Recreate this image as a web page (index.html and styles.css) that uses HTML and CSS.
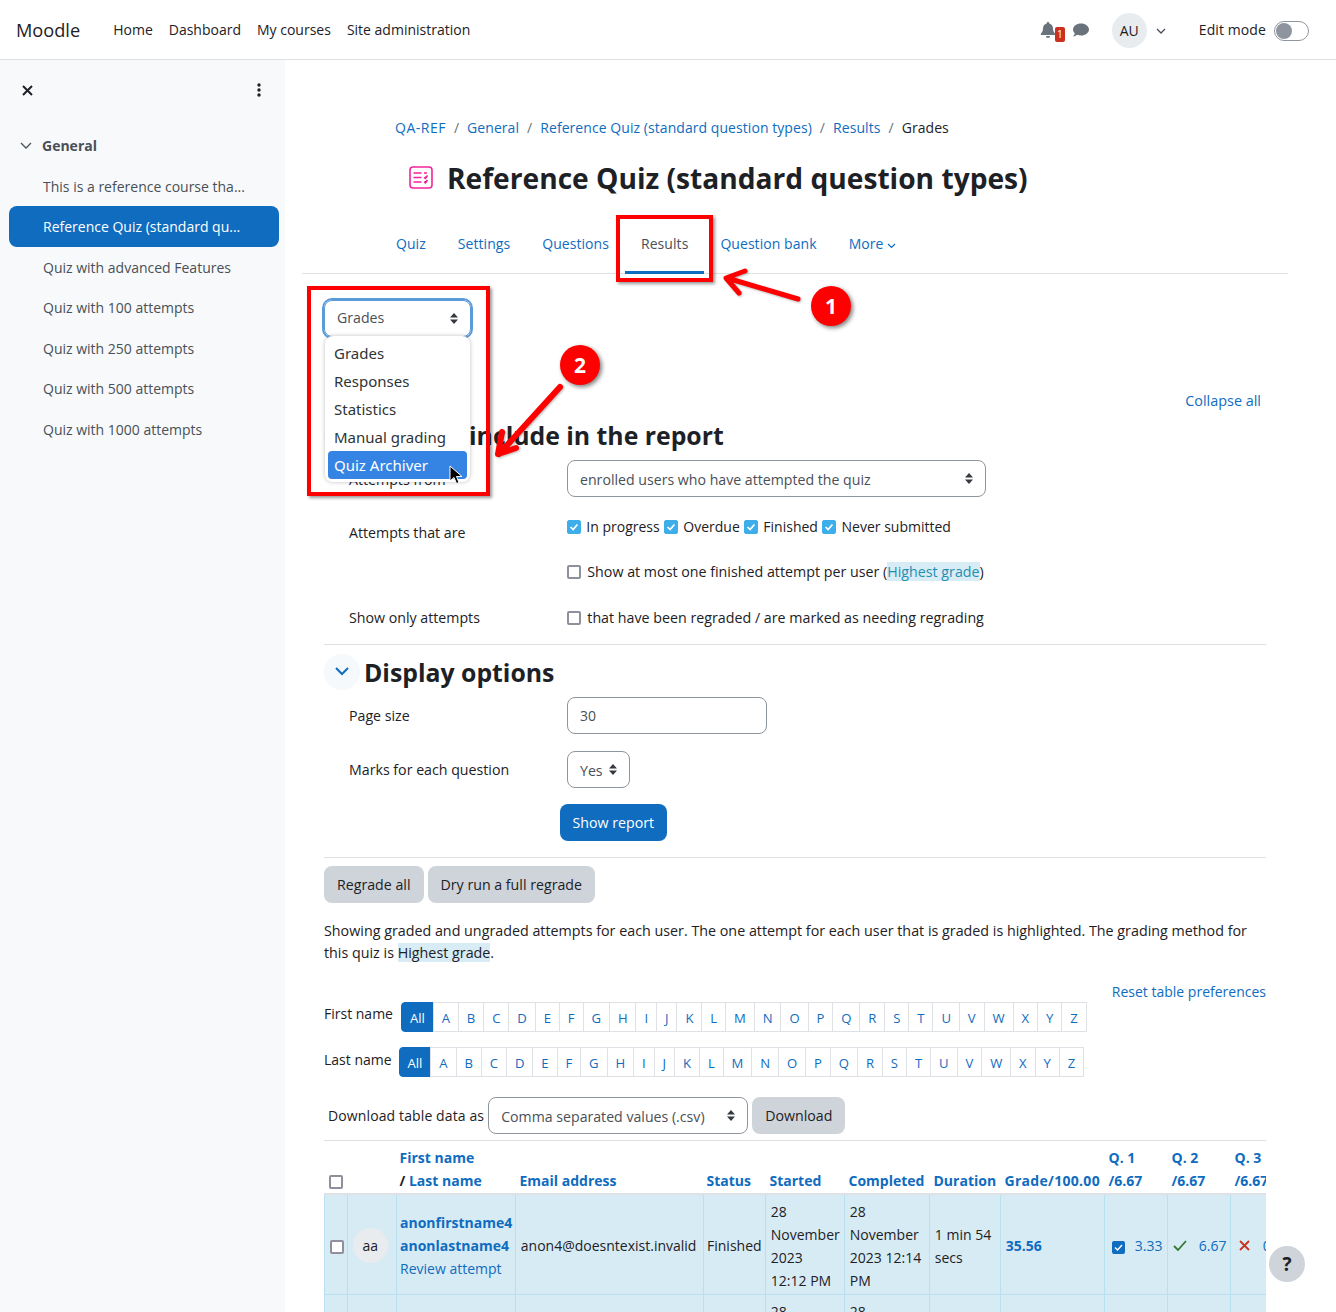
FILE: index.html
```html
<!DOCTYPE html>
<html lang="en">
<head>
    <meta charset="UTF-8">
    <meta name="viewport" content="width=device-width, initial-scale=1.0">
    <title>Reference Quiz: Grades</title>
    <link rel="stylesheet" href="styles.css">
</head>
<body>

    <nav class="navbar">
        <a class="brand">Moodle</a>
        <ul class="primary-nav">
            <li>Home</li>
            <li>Dashboard</li>
            <li>My courses</li>
            <li>Site administration</li>
        </ul>
        <div class="user-nav">
            <span class="bell">
                <svg width="16" height="17" viewBox="0 0 16 17"><path fill="#6a737b" d="M8 0a1.3 1.3 0 0 0-1.3 1.4C4.4 2 3 3.900 3 6.200c0 3.400-1.200 4.300-2.200 5.500-.4.500-.1 1.300.7 1.300h13c.8 0 1.100-.8.700-1.300-1-1.200-2.200-2.100-2.200-5.500 0-2.300-1.400-4.200-3.700-4.800A1.300 1.300 0 0 0 8 0zM6 14a2 2 0 0 0 4 0z"/></svg>
                <span class="bell-count">1</span>
            </span>
            <svg class="chat" width="16" height="15" viewBox="0 0 16 15"><path fill="#6a737b" d="M8 .5C3.600.5 0 3.100 0 6.500c0 1.500.7 2.800 1.800 3.800-.3 1.300-1.100 2.400-1.700 3.200 1.700-.1 3.300-.9 4.300-1.700 1.100.4 2.300.7 3.600.7 4.400 0 8-2.700 8-6S12.400.5 8 .5z"/></svg>
            <span class="avatar">AU</span>
            <svg class="caret" width="10" height="6" viewBox="0 0 10 6"><path fill="none" stroke="#495057" stroke-width="1.300" d="M1 1l4 4 4-4"/></svg>
            <span class="edit-label">Edit mode</span>
            <span class="switch"><span class="knob"></span></span>
        </div>
    </nav>

    <div class="layout">
        <aside class="drawer">
            <div class="drawer-top">
                <svg width="11" height="11" viewBox="0 0 11 11"><path stroke="#1d2125" stroke-width="2" d="M1 1l9 9M10 1l-9 9"/></svg>
                <svg width="4" height="14" viewBox="0 0 4 14"><circle cx="2" cy="2" r="1.700" fill="#1d2125"/><circle cx="2" cy="7" r="1.700" fill="#1d2125"/><circle cx="2" cy="12" r="1.700" fill="#1d2125"/></svg>
            </div>
            <div class="drawer-section">
                <svg width="12" height="8" viewBox="0 0 12 8"><path fill="none" stroke="#495057" stroke-width="1.300" d="M1 1l5 5 5-5"/></svg>
                <span>General</span>
            </div>
            <ul class="drawer-list">
                <li>This is a reference course tha...</li>
                <li class="active">Reference Quiz (standard qu...</li>
                <li>Quiz with advanced Features</li>
                <li>Quiz with 100 attempts</li>
                <li>Quiz with 250 attempts</li>
                <li>Quiz with 500 attempts</li>
                <li>Quiz with 1000 attempts</li>
            </ul>
        </aside>

        <main class="main">
            <div class="page-head">
                <ol class="breadcrumb">
                    <li><a>QA-REF</a></li>
                    <li class="sep">/</li>
                    <li><a>General</a></li>
                    <li class="sep">/</li>
                    <li><a>Reference Quiz (standard question types)</a></li>
                    <li class="sep">/</li>
                    <li><a>Results</a></li>
                    <li class="sep">/</li>
                    <li>Grades</li>
                </ol>
                <div class="title-row">
                    <svg width="24" height="23" viewBox="0 0 24 23"><rect x="1" y="1" width="22" height="21" rx="3" fill="none" stroke="#f5249c" stroke-width="1.600"/><path stroke="#f5249c" stroke-width="1.500" d="M4.500 7h8M4.500 11.500h8M4.500 16h8M15 7h3M15 11.500l1.500 1 2-3M15 16l1.500 1 2-3"/></svg>
                    <h1>Reference Quiz (standard question types)</h1>
                </div>
            </div>

            <ul class="tabs">
                <li><a>Quiz</a></li>
                <li><a>Settings</a></li>
                <li><a>Questions</a></li>
                <li class="active"><a>Results</a></li>
                <li><a>Question bank</a></li>
                <li><a>More <svg width="9" height="6" viewBox="0 0 9 6"><path fill="none" stroke="#0f6cbf" stroke-width="1.200" d="M1 1l3.500 3.500L8 1"/></svg></a></li>
            </ul>

            <div class="content">
                <div class="select report-select">Grades<svg class="updown" width="8" height="11" viewBox="0 0 8 11"><path fill="#343a40" d="M4 0l4 4.500H0zM4 11L0 6.500h8z"/></svg></div>

                <div class="collapse-all"><a>Collapse all</a></div>

                <div class="section-head first">
                    <span class="chevron"><svg width="14" height="9" viewBox="0 0 14 9"><path fill="none" stroke="#0f6cbf" stroke-width="2" d="M1 1l6 6 6-6"/></svg></span>
                    <h3>What to include in the report</h3>
                </div>

                <div class="row row-attempts-from">
                    <label>Attempts from</label>
                    <div class="select wide">enrolled users who have attempted the quiz<svg class="updown" width="8" height="11" viewBox="0 0 8 11"><path fill="#343a40" d="M4 0l4 4.500H0zM4 11L0 6.500h8z"/></svg></div>
                </div>

                <div class="row row-attempts-that">
                    <label>Attempts that are</label>
                    <div>
                        <div class="checks">
                            <span class="check on"></span><span>In progress</span>
                            <span class="check on"></span><span>Overdue</span>
                            <span class="check on"></span><span>Finished</span>
                            <span class="check on"></span><span>Never submitted</span>
                        </div>
                        <div class="checks second">
                            <span class="check"></span><span>Show at most one finished attempt per user (<a class="hl link-hl">Highest grade</a>)</span>
                        </div>
                    </div>
                </div>

                <div class="row row-only">
                    <label>Show only attempts</label>
                    <div class="checks">
                        <span class="check"></span><span>that have been regraded / are marked as needing regrading</span>
                    </div>
                </div>

                <hr class="rule rule-a">

                <div class="section-head">
                    <span class="chevron"><svg width="14" height="9" viewBox="0 0 14 9"><path fill="none" stroke="#0f6cbf" stroke-width="2" d="M1 1l6 6 6-6"/></svg></span>
                    <h3>Display options</h3>
                </div>

                <div class="row row-size">
                    <label>Page size</label>
                    <input class="text-input" type="text" value="30">
                </div>
                <div class="row row-marks">
                    <label>Marks for each question</label>
                    <div class="select small">Yes<svg class="updown" width="8" height="11" viewBox="0 0 8 11"><path fill="#343a40" d="M4 0l4 4.500H0zM4 11L0 6.500h8z"/></svg></div>
                </div>
                <button class="btn primary show-report">Show report</button>

                <hr class="rule rule-b">

                <div class="regrade">
                    <button class="btn secondary">Regrade all</button>
                    <button class="btn secondary">Dry run a full regrade</button>
                </div>

                <p class="summary">Showing graded and ungraded attempts for each user. The one attempt for each user that is graded is highlighted. The grading method for this quiz is <span class="hl">Highest grade</span>.</p>

                <div class="reset"><a>Reset table preferences</a></div>

                <div class="initials first-initials" id="firstInitials"><span class="initials-label">First name</span></div>
                <div class="initials last-initials" id="lastInitials"><span class="initials-label">Last name</span></div>

                <div class="download">
                    <span class="download-label">Download table data as</span>
                    <div class="select csv">Comma separated values (.csv)<svg class="updown" width="8" height="11" viewBox="0 0 8 11"><path fill="#343a40" d="M4 0l4 4.500H0zM4 11L0 6.500h8z"/></svg></div>
                    <button class="btn secondary">Download</button>
                </div>

                <div class="table-wrap">
                    <table class="grades">
                        <colgroup>
                            <col style="width:23px"><col style="width:49px"><col style="width:119px"><col style="width:188px"><col style="width:62px"><col style="width:79px"><col style="width:85px"><col style="width:71px"><col style="width:104px"><col style="width:63px"><col style="width:63px"><col style="width:63px">
                        </colgroup>
                        <thead>
                            <tr>
                                <th><span class="check"></span></th>
                                <th></th>
                                <th class="name-cell"><a>First name</a><br><span class="slash">/</span> <a>Last name</a></th>
                                <th><a>Email address</a></th>
                                <th class="status-cell"><a>Status</a></th>
                                <th><a>Started</a></th>
                                <th><a>Completed</a></th>
                                <th><a>Duration</a></th>
                                <th class="grade-head"><a>Grade/100.00</a></th>
                                <th><a>Q. 1<br>/6.67</a></th>
                                <th><a>Q. 2<br>/6.67</a></th>
                                <th><a>Q. 3<br>/6.67</a></th>
                            </tr>
                        </thead>
                        <tbody>
                            <tr>
                                <td><span class="check"></span></td>
                                <td><span class="user-pic">aa</span></td>
                                <td class="name-cell"><a class="strong">anonfirstname4<br>anonlastname4</a><br><a>Review attempt</a></td>
                                <td>anon4@doesntexist.invalid</td>
                                <td class="status-cell">Finished</td>
                                <td>28<br>November<br>2023<br>12:12 PM</td>
                                <td>28<br>November<br>2023 12:14<br>PM</td>
                                <td>1 min 54 secs</td>
                                <td><a class="strong">35.56</a></td>
                                <td class="mark"><span class="flag"><svg width="9" height="7" viewBox="0 0 9 7"><path fill="none" stroke="#fff" stroke-width="1.400" d="M1 3.500l2.500 2.500L8 1"/></svg></span><a>3.33</a></td>
                                <td class="mark"><svg class="tick" width="14" height="11" viewBox="0 0 14 11"><path fill="none" stroke="#357a32" stroke-width="1.800" d="M1 6l4 4 8-9"/></svg><a>6.67</a></td>
                                <td class="mark"><svg class="cross" width="11" height="11" viewBox="0 0 11 11"><path stroke="#ca3120" stroke-width="1.800" d="M1 1l9 9M10 1l-9 9"/></svg><a>0.00</a></td>
                            </tr>
                            <tr>
                                <td><span class="check"></span></td>
                                <td></td>
                                <td></td>
                                <td></td>
                                <td></td>
                                <td>28<br>November<br>2023<br>12:15 PM</td>
                                <td>28<br>November<br>2023 12:16<br>PM</td>
                                <td></td>
                                <td></td>
                                <td></td>
                                <td></td>
                                <td></td>
                            </tr>
                        </tbody>
                    </table>
                </div>
            </div>
        </main>
    </div>

    <!-- screenshot annotations and open menu, these sit over the page -->
    <div class="menu">
        <div>Grades</div>
        <div>Responses</div>
        <div>Statistics</div>
        <div>Manual grading</div>
        <div class="picked">Quiz Archiver</div>
    </div>
    <svg class="cursor" width="14" height="20" viewBox="0 0 14 20"><path fill="#000" stroke="#fff" stroke-width="1" d="M1 1v15l4-3.500 2.500 6 2.500-1-2.500-6H13z"/></svg>
    <div class="red-box box-results"></div>
    <div class="red-box box-menu"></div>
    <svg class="arrows" width="1336" height="600" viewBox="0 0 1336 600">
        <g fill="none" stroke="#f00" stroke-width="5" stroke-linecap="round" stroke-linejoin="round">
            <path d="M798 299L727 278M745 271l-19 7 13 15"/>
            <path stroke-width="6" d="M560 387L499 454M502 432l-4 22 18-6"/>
        </g>
    </svg>
    <span class="num num-1">1</span>
    <span class="num num-2">2</span>

    <button class="help">?</button>

    <script>
        const letters = "ABCDEFGHIJKLMNOPQRSTUVWXYZ".split("");

        function fillInitials(id) {
            const row = document.getElementById(id);
            const bar = document.createElement("div");
            bar.className = "initials-bar";
            ["All"].concat(letters).forEach(function (letter) {
                const cell = document.createElement("a");
                cell.textContent = letter;
                if (letter === "All") {
                    cell.className = "on";
                }
                bar.appendChild(cell);
            });
            row.appendChild(bar);
        }

        fillInitials("firstInitials");
        fillInitials("lastInitials");
    </script>

</body>
</html>
```

FILE: styles.css
```css
* {
    box-sizing: border-box;
}

html, body {
    margin: 0;
    height: 1312px;
    overflow: hidden;
}

body {
    position: relative;
    font-family: "Open Sans", "Liberation Sans", sans-serif;
    font-size: 14px;
    line-height: 22.5px;
    color: #1d2125;
    background: #fff;
}

a {
    color: #0f6cbf;
    text-decoration: none;
}

ul, ol {
    list-style: none;
    margin: 0;
    padding: 0;
}

/* top bar */
.navbar {
    display: flex;
    align-items: center;
    height: 60px;
    padding: 2px 27px 0 16px;
    border-bottom: 1px solid #dee2e6;
    background: #fff;
}

.brand {
    color: #1d2125;
    font-size: 18.200px;
    margin-right: 33px;
}

.primary-nav {
    display: flex;
    gap: 16px;
}

.user-nav {
    display: flex;
    align-items: center;
    margin-left: auto;
}

.bell {
    position: relative;
    display: flex;
    margin-right: 17px;
}

.bell-count {
    position: absolute;
    left: 15px;
    top: 5px;
    width: 10px;
    height: 15px;
    background: #ca3120;
    border-radius: 2px;
    color: #fff;
    font-size: 10px;
    line-height: 15px;
    text-align: center;
}

.chat {
    margin-right: 23px;
}

.avatar {
    width: 35px;
    height: 35px;
    border-radius: 50%;
    background: #e9ecef;
    text-align: center;
    line-height: 35px;
    margin-right: 9px;
}

.caret {
    margin-right: 33px;
}

.edit-label {
    margin-right: 8px;
    letter-spacing: 0.1px;
}

.switch {
    display: flex;
    align-items: center;
    width: 35px;
    height: 20px;
    border: 1px solid #8f959e;
    border-radius: 10px;
    padding: 1px;
}

.knob {
    width: 16px;
    height: 16px;
    border-radius: 50%;
    background: #8f959e;
}

/* layout */
.layout {
    display: flex;
    height: 1252px;
}

.drawer {
    width: 285px;
    flex: none;
    background: #f8f9fa;
    padding: 0 6px 0 9px;
    color: #495057;
}

.drawer-top {
    display: flex;
    justify-content: space-between;
    align-items: center;
    height: 20px;
    margin-top: 20px;
    padding: 0 18px 0 13px;
}

.drawer-section {
    display: flex;
    align-items: center;
    gap: 10px;
    margin-top: 35px;
    padding-left: 11px;
    font-weight: 700;
}

.drawer-list {
    margin-top: 8px;
}

.drawer-list li {
    height: 40.500px;
    line-height: 42px;
    padding-left: 34px;
}

.drawer-list li.active {
    background: #0f6cbf;
    color: #fff;
    border-radius: 8px;
    line-height: 41px;
}

.main {
    flex: 1;
    min-width: 0;
    padding: 0 48px 0 17px;
}

.page-head {
    padding: 57px 0 0 93px;
}

.breadcrumb {
    display: flex;
    gap: 8px;
    letter-spacing: 0.06px;
}

.breadcrumb li:first-child {
    letter-spacing: 0.5px;
}

.sep {
    color: #6a737b;
}

.title-row {
    display: flex;
    align-items: center;
    gap: 14px;
    height: 40px;
    margin-top: 18px;
    padding-left: 14px;
}

h1 {
    margin: 0;
    font-size: 28.150px;
    line-height: 40px;
    font-weight: 700;
}

.tabs {
    display: flex;
    height: 57px;
    margin-top: 19px;
    padding-left: 78px;
    border-bottom: 1px solid #dee2e6;
    letter-spacing: 0.06px;
}

.tabs li {
    padding: 16px 16px 0;
}

.tabs li.active {
    border-bottom: 3px solid #0f6cbf;
    height: 57px;
}

.tabs li.active a {
    color: #495057;
}

.content {
    padding: 0 22px;
    height: 1038px;
}

/* form bits */
.select {
    position: relative;
    height: 37px;
    border: 1px solid #8f959e;
    border-radius: 8px;
    padding: 0 12px;
    font-size: 14.150px;
    line-height: 37px;
    color: #495057;
}

.updown {
    position: absolute;
    right: 12px;
    top: 12px;
}

.report-select {
    width: 147px;
    margin-top: 26px;
    box-shadow: 0 0 0 2px #5b9bd9;
    border-color: #5b9bd9;
    line-height: 34px;
}

.collapse-all {
    text-align: right;
    padding-right: 5px;
    margin-top: 53px;
    font-size: 14.400px;
}

.section-head {
    display: flex;
    align-items: center;
    height: 36px;
    gap: 4px;
}

.section-head.first {
    margin-top: 5px;
}

.section-head h3 {
    margin: 0;
    font-size: 24.800px;
    line-height: 36px;
    font-weight: 700;
}

.chevron {
    display: flex;
    align-items: center;
    justify-content: center;
    width: 36px;
    height: 36px;
    border-radius: 50%;
    background: #f5f9fc;
}

.row {
    display: grid;
    grid-template-columns: 218px 1fr;
    padding-left: 25px;
    align-items: center;
}

.row label {
    font-size: 14.200px;
}

.row-attempts-from {
    margin-top: 7px;
}

.row-attempts-from label {
    padding-top: 4px;
}

.wide {
    width: 419px;
}

.row-attempts-that {
    align-items: start;
    margin-top: 19px;
}

.row-attempts-that label {
    padding-top: 6px;
}

.checks {
    display: flex;
    align-items: center;
    gap: 4.300px;
}

.checks .check {
    margin-right: 1px;
}

.checks.second, .row-only .checks {
    font-size: 14.250px;
}

.checks.second .check, .row-only .check {
    margin-right: 2px;
}

.checks.second {
    margin-top: 22px;
}

.check {
    display: inline-block;
    width: 14px;
    height: 14px;
    flex: none;
    vertical-align: middle;
    border: 2px solid #8f8f9d;
    border-radius: 2px;
    background: #fff;
}

.check.on {
    border: 1px solid #3daee9;
    background: #3daee9 url("data:image/svg+xml,%3Csvg xmlns='http://www.w3.org/2000/svg' viewBox='0 0 14 14'%3E%3Cpath fill='none' stroke='%23fff' stroke-width='2' d='M3 7l3 3 5-6'/%3E%3C/svg%3E") center / 100% no-repeat;
}

.hl {
    background: #d8ecf6;
}

.link-hl {
    color: #1f8fb0;
}

.row-only {
    margin-top: 24px;
}

.rule {
    margin: 0;
    border: 0;
    border-top: 1px solid #dee2e6;
}

.rule-a {
    margin-top: 14px;
    margin-bottom: 9px;
}

.row-size {
    margin-top: 7px;
}

.row-size label, .row-marks label {
    padding-top: 2px;
}

.text-input {
    width: 200px;
    height: 37px;
    border: 1px solid #8f959e;
    border-radius: 8px;
    padding: 0 12px;
    font: inherit;
    color: #495057;
}

.row-marks {
    margin-top: 17px;
}

.small {
    width: 63px;
}

.btn {
    height: 37px;
    border: 0;
    border-radius: 8px;
    padding: 2px 13px 0;
    font: inherit;
    font-size: 14.200px;
}

.primary {
    background: #0f6cbf;
    color: #fff;
}

.secondary {
    background: #ced4da;
    color: #1d2125;
}

.show-report {
    display: block;
    margin: 16px 0 0 236px;
    padding: 3px 12.500px 0;
}

.rule-b {
    margin-top: 16px;
}

.regrade {
    display: flex;
    gap: 4px;
    margin-top: 8px;
}

.summary {
    margin: 17px 0 0;
    font-size: 14.300px;
}

.reset {
    text-align: right;
    margin-top: 16px;
}

/* initials bars */
.initials {
    display: flex;
    align-items: center;
    gap: 8px;
}

.first-initials {
    margin-top: -1px;
    gap: 9px;
}

.last-initials {
    margin-top: 15px;
}

.initials-label {
    position: relative;
    top: -3px;
}

.last-initials .initials-label {
    top: -2px;
}

.initials-bar {
    display: flex;
    height: 30px;
}

.initials-bar a {
    display: block;
    padding: 0 7.950px;
    border: 1px solid #dee2e6;
    margin-left: -1px;
    font-size: 13.100px;
    line-height: 30px;
}

.initials-bar a.on {
    background: #0f6cbf;
    border-color: #0f6cbf;
    color: #fff;
    border-radius: 4px 0 0 4px;
}

.download {
    display: flex;
    align-items: center;
    gap: 4px;
    margin-top: 20px;
    padding-left: 4px;
}

.download-label {
    letter-spacing: 0.12px;
    padding-top: 2px;
}

.csv {
    width: 260px;
}

/* table */
.table-wrap {
    width: 942px;
    margin-top: 6px;
    border-top: 1px solid #dee2e6;
    overflow: hidden;
}

.grades {
    border-collapse: collapse;
    table-layout: fixed;
    width: 969px;
}

.grades th {
    text-align: left;
    vertical-align: bottom;
    padding: 6px 4px 1px;
    border-bottom: 2px solid #dee2e6;
    font-weight: 700;
}

.grades th.name-cell, .grades td.name-cell {
    padding-left: 3px;
}

.grades th.status-cell, .grades td.status-cell {
    padding-left: 3px;
}

.grade-head {
    letter-spacing: 0.3px;
}

.slash {
    font-weight: 700;
}

.grades td {
    padding: 4.500px 4.800px 2.500px;
    border: 1px solid #b8e0ee;
    background: #d7ebf5;
    line-height: 23px;
    vertical-align: middle;
}

.strong {
    font-weight: 700;
}

.user-pic {
    display: block;
    width: 35px;
    height: 35px;
    border-radius: 50%;
    background: #e9ecef;
    text-align: center;
    line-height: 35px;
}

.mark {
    white-space: nowrap;
}

.flag {
    display: inline-flex;
    align-items: center;
    justify-content: center;
    width: 13px;
    height: 13px;
    background: #0f6cbf;
    border-radius: 2px;
    margin: 0 10px 0 2px;
}

.tick {
    margin-right: 12px;
}

.cross {
    margin: 0 13px 0 3px;
}

/* open select menu and screenshot marks */
.menu {
    position: absolute;
    left: 325px;
    top: 336px;
    width: 145px;
    height: 146px;
    padding: 3px;
    background: #fff;
    border-radius: 8px;
    box-shadow: 0 0 4px rgba(0, 0, 0, 0.25);
    font-family: "Noto Sans", sans-serif;
    font-size: 15px;
    color: #2e3436;
}

.menu div {
    height: 28px;
    line-height: 28px;
    padding-left: 6px;
}

.menu .picked {
    background: #3584e4;
    color: #fff;
    border-radius: 4px;
}

.cursor {
    position: absolute;
    left: 449px;
    top: 465px;
}

.red-box {
    position: absolute;
    border: 4px solid #f00;
    box-shadow: 2px 2px 3px rgba(0, 0, 0, 0.4);
}

.box-results {
    left: 616px;
    top: 215px;
    width: 97px;
    height: 67px;
}

.box-menu {
    left: 307px;
    top: 286px;
    width: 183px;
    height: 210px;
}

.arrows {
    position: absolute;
    left: 0;
    top: 0;
    filter: drop-shadow(1px 1px 1px rgba(0, 0, 0, 0.3));
}

.num {
    position: absolute;
    width: 40px;
    height: 40px;
    border-radius: 50%;
    background: #f00;
    color: #fff;
    font-weight: 700;
    font-size: 21px;
    line-height: 40px;
    text-align: center;
    box-shadow: 2px 2px 4px rgba(0, 0, 0, 0.5);
}

.num-1 {
    left: 811px;
    top: 286px;
}

.num-2 {
    left: 560px;
    top: 345px;
}

.help {
    position: absolute;
    left: 1269px;
    top: 1246px;
    width: 36px;
    height: 36px;
    border: 0;
    border-radius: 50%;
    background: #ced4da;
    color: #1d2125;
    font: 700 19px "Open Sans", sans-serif;
}
```
